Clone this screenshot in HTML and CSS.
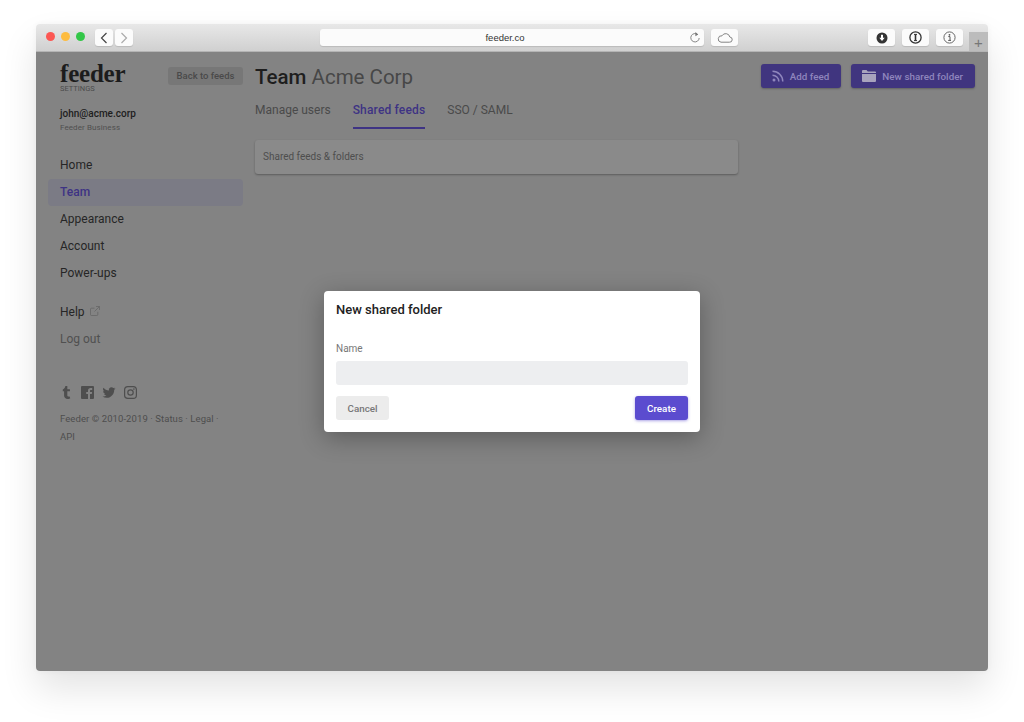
FILE: index.html
```html
<!DOCTYPE html>
<html lang="en">
<head>
<meta charset="utf-8">
<title>Feeder settings</title>
<link rel="stylesheet" href="styles.css">
</head>
<body>
<div class="window">
  <header class="toolbar">
    <div class="lights"><i class="light red"></i><i class="light yellow"></i><i class="light green"></i></div>
    <div class="nav-btns">
      <span class="tb-btn nav-btn"><svg width="10" height="14" viewBox="0 0 10 14"><path d="M7.5 2 2.5 7l5 5" class="stroke dark"/></svg></span>
      <span class="tb-btn nav-btn"><svg width="10" height="14" viewBox="0 0 10 14"><path d="M2.5 2l5 5-5 5" class="stroke light-stroke"/></svg></span>
    </div>
    <div class="url">
      <span class="url-text">feeder.co</span>
      <svg class="reload" width="12" height="13" viewBox="0 0 12 13"><path d="M8.8 3.6A4.2 4.2 0 1 0 10.2 7" class="stroke mid thin"/><path d="M6.4 1l2.8 2.5-2.8 1.7z" fill="#777"/></svg>
    </div>
    <span class="tb-btn cloud-btn"><svg width="16" height="10" viewBox="0 0 16 10"><path d="M4 9.2h8.4a2.6 2.6 0 0 0 .4-5.2A4.2 4.2 0 0 0 5 2.8 3.2 3.2 0 0 0 4 9.2z" class="stroke mid thin"/></svg></span>
    <div class="ext-btns">
      <span class="tb-btn ext-btn"><svg width="12" height="12" viewBox="0 0 12 12"><circle cx="6" cy="6" r="5.5" fill="#333"/><path d="M5 2.8h2v3h1.7L6 9 3.3 5.8H5z" fill="#fff"/></svg></span>
      <span class="tb-btn ext-btn"><svg width="13" height="13" viewBox="0 0 13 13"><circle cx="6.5" cy="6.5" r="5.6" fill="none" stroke="#333" stroke-width="1.3"/><path d="M5 3.4h3M5 9.6h3" stroke="#333"/><path d="M6.5 3.4v6.2" stroke="#333" stroke-width="1.6"/></svg></span>
      <span class="tb-btn ext-btn"><svg width="13" height="13" viewBox="0 0 13 13"><circle cx="6.5" cy="6.5" r="5.6" fill="none" stroke="#666"/><circle cx="6.5" cy="3.8" r=".9" fill="#555"/><path d="M5.3 5.6h1.7v3.6M5.2 9.4h2.8" fill="none" stroke="#555"/></svg></span>
    </div>
    <span class="new-tab">+</span>
  </header>

  <div class="app">
    <aside class="sidebar">
      <div class="brand">
        <div class="brand-text">
          <div class="logo">feeder</div>
          <div class="logo-sub">SETTINGS</div>
        </div>
        <a class="back-btn">Back to feeds</a>
      </div>
      <div class="account">
        <div class="email">john@acme.corp</div>
        <div class="plan">Feeder Business</div>
      </div>
      <nav class="menu">
        <a class="menu-item">Home</a>
        <a class="menu-item active">Team</a>
        <a class="menu-item">Appearance</a>
        <a class="menu-item">Account</a>
        <a class="menu-item">Power-ups</a>
      </nav>
      <nav class="menu menu-second">
        <a class="menu-item">Help <svg class="ext-link" width="10" height="10" viewBox="0 0 10 10"><path d="M7.8 5.8v2.7a1 1 0 0 1-1 1H1.5a1 1 0 0 1-1-1V3.2a1 1 0 0 1 1-1h3M6 .5h3.5V4M9.3.7 4.5 5.5" fill="none" stroke="#666" stroke-width=".8"/></svg></a>
        <a class="menu-item muted">Log out</a>
      </nav>
      <div class="social">
        <svg width="13" height="13" viewBox="0 0 24 24"><path fill="#4e4e4e" d="M14.563 24c-5.093 0-7.031-3.756-7.031-6.411V9.747H5.116V6.648c3.63-1.313 4.512-4.596 4.71-6.469C9.84.051 9.941 0 9.999 0h3.517v6.114h4.801v3.633h-4.82v7.47c.016 1.001.375 2.371 2.207 2.371h.09c.631-.02 1.486-.205 1.936-.419l1.156 3.425c-.436.636-2.4 1.374-4.156 1.404h-.178l.011.002z"/></svg>
        <svg width="13" height="13" viewBox="0 0 13 13"><path fill="#4e4e4e" fill-rule="evenodd" d="M1 0h11a1 1 0 0 1 1 1v11a1 1 0 0 1-1 1H9V8h1.8l.3-2H9V4.9c0-.6.2-1 1-1h1.2V2.1c-.3 0-.9-.1-1.6-.1C8 2 7 2.9 7 4.6V6H5.200v2H7v5H1a1 1 0 0 1-1-1V1a1 1 0 0 1 1-1z"/></svg>
        <svg width="14" height="13" viewBox="0 0 24 24"><path fill="#4e4e4e" d="M23.953 4.57a10 10 0 01-2.825.775 4.958 4.958 0 002.163-2.723c-.951.555-2.005.959-3.127 1.184a4.92 4.92 0 00-8.384 4.482C7.69 8.095 4.067 6.13 1.64 3.162a4.822 4.822 0 00-.666 2.475c0 1.71.87 3.213 2.188 4.096a4.904 4.904 0 01-2.228-.616v.06a4.923 4.923 0 003.946 4.827 4.996 4.996 0 01-2.212.085 4.936 4.936 0 004.604 3.417 9.867 9.867 0 01-6.102 2.105c-.39 0-.779-.023-1.17-.067a13.995 13.995 0 007.557 2.209c9.053 0 13.998-7.496 13.998-13.985 0-.21 0-.42-.015-.63A9.935 9.935 0 0024 4.59z"/></svg>
        <svg width="13" height="13" viewBox="0 0 13 13"><rect x=".6" y=".6" width="11.800" height="11.800" rx="3.200" fill="none" stroke="#4e4e4e" stroke-width="1.200"/><circle cx="6.500" cy="6.500" r="2.700" fill="none" stroke="#4e4e4e" stroke-width="1.200"/><circle cx="9.900" cy="3.100" r=".8" fill="#4e4e4e"/></svg>
      </div>
      <p class="legal">Feeder © 2010-2019 · Status · Legal · API</p>
    </aside>

    <main class="main">
      <div class="main-head">
        <div class="main-col">
          <h1 class="title"><strong>Team</strong> Acme Corp</h1>
          <div class="tabs">
            <a class="tab">Manage users</a>
            <a class="tab selected">Shared feeds</a>
            <a class="tab">SSO / SAML</a>
          </div>
          <div class="card">Shared feeds &amp; folders</div>
        </div>
        <div class="actions">
          <a class="action"><svg width="12" height="12" viewBox="0 0 12 12"><circle cx="2" cy="10" r="1.500" fill="#8f86bd"/><path d="M.5 5.200A6.300 6.300 0 0 1 6.800 11.500M.5 1.200A10.300 10.300 0 0 1 10.800 11.500" fill="none" stroke="#8f86bd" stroke-width="1.500"/></svg>Add feed</a>
          <a class="action"><svg width="14" height="12" viewBox="0 0 14 12"><path d="M0 1a1 1 0 0 1 1-1h3.500l1.300 1.500H13a1 1 0 0 1 1 1V3H0zM0 4h14v7a1 1 0 0 1-1 1H1a1 1 0 0 1-1-1z" fill="#a8a3bd"/></svg>New shared folder</a>
        </div>
      </div>
    </main>

    <div class="overlay">
      <form class="modal">
        <h2 class="modal-title">New shared folder</h2>
        <label class="field-label" for="folder-name">Name</label>
        <input class="field-input" id="folder-name" type="text">
        <div class="modal-actions">
          <button class="btn btn-cancel" type="button">Cancel</button>
          <button class="btn btn-create" type="button">Create</button>
        </div>
      </form>
    </div>
  </div>
</div>
</body>
</html>
```

FILE: styles.css
```css
* { box-sizing: border-box; }
html, body { height: 100%; }
body {
  margin: 0;
  padding: 24px 36px 51px;
  background: #fff;
  font-family: Roboto, "Noto Sans", sans-serif;
  color: #222;
}
a { display: block; }

.window {
  height: 647px;
  display: flex;
  flex-direction: column;
  border-radius: 4px;
  box-shadow: 0 18px 36px rgba(0, 0, 0, .11), 0 0 6px rgba(0, 0, 0, .04);
}

/* Browser chrome */
.toolbar {
  height: 28px;
  flex: none;
  display: flex;
  align-items: flex-start;
  padding: 5px 0 0 10px;
  background: linear-gradient(#e8e8e8, #d0d0d0);
  border-bottom: 1px solid #b4b4b4;
  border-radius: 4px 4px 0 0;
}
.lights { display: flex; gap: 6px; margin-top: 3px; width: 49px; }
.light { width: 9px; height: 9px; border-radius: 50%; }
.red { background: #fc5753; }
.yellow { background: #fdbc40; }
.green { background: #33c748; }
.tb-btn {
  height: 17px;
  display: flex;
  align-items: center;
  justify-content: center;
  background: #fbfbfb;
  border-radius: 3px;
  box-shadow: 0 1px 1px rgba(0, 0, 0, .12);
}
.nav-btns { display: flex; gap: 2px; }
.nav-btn { width: 18px; }
.stroke { fill: none; stroke-width: 1.2; }
.dark { stroke: #444; }
.light-stroke { stroke: #aaa; }
.mid { stroke: #777; }
.thin { stroke-width: .9; }
.url {
  width: 384px;
  height: 17px;
  margin-left: 187px;
  padding-right: 14px;
  position: relative;
  display: flex;
  align-items: center;
  justify-content: center;
  background: #fbfbfb;
  border-radius: 3px;
  box-shadow: 0 1px 1px rgba(0, 0, 0, .12);
}
.url-text { font-size: 9.500px; color: #333; font-family: "Liberation Sans", sans-serif; }
.reload { position: absolute; right: 3px; top: 2px; }
.cloud-btn { width: 27px; margin-left: 7px; }
.ext-btns { display: flex; gap: 7px; margin-left: 130px; }
.ext-btn { width: 27px; }
.new-tab {
  width: 19px;
  height: 19px;
  margin: 3px 0 0 6px;
  background: #bcbcbc;
  color: #777;
  font: 300 15px/21px "Liberation Sans", sans-serif;
  text-align: center;
}

/* App */
.app {
  position: relative;
  flex: 1;
  display: flex;
  background: #838383;
  border-radius: 0 0 4px 4px;
}
.sidebar { width: 207px; flex: none; padding: 12px 0 0 12px; }
.brand { display: flex; justify-content: space-between; align-items: flex-start; }
.brand-text { padding-left: 12px; }
.logo {
  height: 20px;
  font: 700 25px/20px "Liberation Serif", serif;
  letter-spacing: -.2px;
  color: #1c1c1c;
}
.logo-sub { font-size: 7.500px; line-height: 9px; color: #4c4c4c; }
.back-btn {
  width: 75px;
  height: 18px;
  margin-top: 3px;
  font-size: 9.500px;
  font-weight: 500;
  line-height: 18px;
  text-align: center;
  color: #4a4a4a;
  background: #777;
  border-radius: 3px;
}
.account { padding-left: 12px; margin-top: 13px; }
.email { font-size: 10px; font-weight: 500; line-height: 15px; color: #1e1e1e; }
.plan { font-size: 8px; line-height: 14px; letter-spacing: .1px; color: #505050; }
.menu { margin-top: 17px; }
.menu-second { margin-top: 12px; }
.menu-item {
  height: 27px;
  padding-left: 12px;
  font-size: 12px;
  line-height: 27px;
  color: #262626;
  border-radius: 4px;
}
.menu-item.active { background: #7b7b85; color: #3e3384; font-weight: 500; }
.menu-item.muted { color: #505050; }
.ext-link { margin-left: 2px; }
.social { display: flex; align-items: center; gap: 8px; padding-left: 12px; margin-top: 33px; }
.legal {
  margin: 11px 0 0;
  padding-left: 12px;
  width: 175px;
  font-size: 9.500px;
  line-height: 18px;
  letter-spacing: .08px;
  color: #4e4e4e;
}

.main { flex: 1; padding: 12px 13px 0 12px; }
.main-head { display: flex; justify-content: space-between; }
.main-col { width: 483px; }
.title { margin: 0; font-size: 20.500px; font-weight: 400; line-height: 26px; color: #474747; }
.title strong { font-weight: 500; color: #1e1e1e; }
.tabs { display: flex; gap: 22px; margin-top: 9px; }
.tab {
  height: 30px;
  font-size: 12px;
  line-height: 22px;
  color: #4a4a4a;
}
.tab.selected { color: #3e3384; font-weight: 500; letter-spacing: .17px; border-bottom: 2px solid #3e3384; }
.card {
  height: 34px;
  margin-top: 11px;
  padding-left: 8px;
  font-size: 10px;
  line-height: 33px;
  color: #4e4e4e;
  background: #8a8a8a;
  border-radius: 3px;
  box-shadow: 0 1px 2px rgba(0, 0, 0, .3);
}
.actions { display: flex; gap: 10px; }
.action {
  height: 24px;
  display: flex;
  align-items: center;
  gap: 6px;
  padding: 0 12px 0 11px;
  font-size: 9.800px;
  font-weight: 500;
  letter-spacing: .04px;
  color: #8f86bd;
  background: #40357f;
  border-radius: 3px;
  box-shadow: 0 1px 2px rgba(0, 0, 0, .25);
}

/* Dialog */
.overlay {
  position: absolute;
  inset: 0;
  display: flex;
  align-items: center;
  justify-content: center;
}
.modal {
  width: 376px;
  height: 141px;
  padding: 11px 12px 0;
  background: #fff;
  border-radius: 4px;
  box-shadow: 0 6px 24px rgba(0, 0, 0, .3);
}
.modal-title { margin: 0; font-size: 13px; font-weight: 500; line-height: 16px; color: #222; }
.field-label { display: block; margin-top: 24px; font-size: 10px; line-height: 13px; color: #777; }
.field-input {
  display: block;
  width: 100%;
  height: 24px;
  margin-top: 6px;
  border: 0;
  background: #edeef0;
  border-radius: 3px;
}
.modal-actions { display: flex; justify-content: space-between; margin-top: 11px; }
.btn {
  width: 53px;
  height: 24px;
  padding: 0;
  border: 0;
  border-radius: 3px;
  font-family: inherit;
  font-size: 9.800px;
  font-weight: 500;
}
.btn-cancel { background: #ececec; color: #777; }
.btn-create { background: #5b4ccf; color: #fff; box-shadow: 0 1px 3px rgba(91, 76, 207, .5); }
```
